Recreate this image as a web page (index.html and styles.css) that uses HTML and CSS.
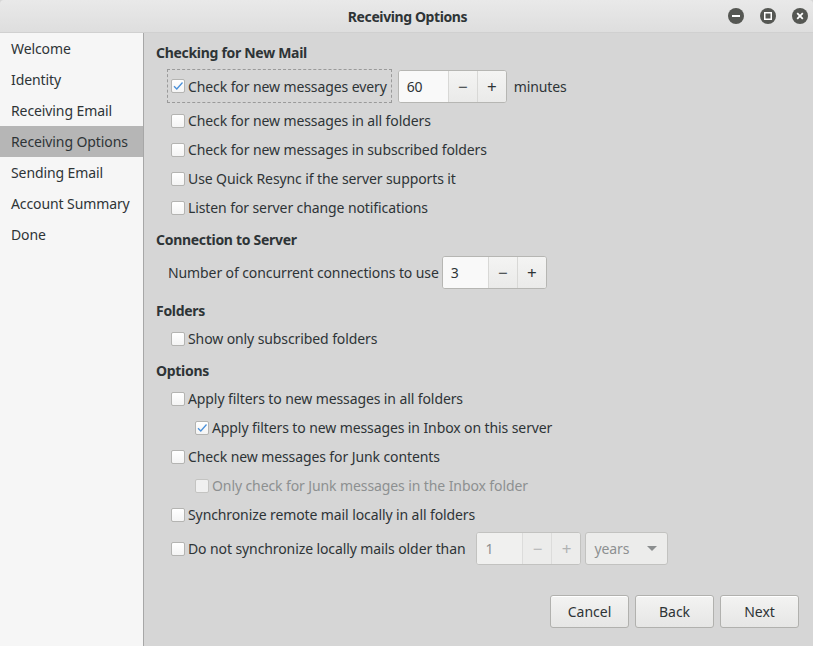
FILE: index.html
```html
<!DOCTYPE html>
<html>
<head>
<meta charset="utf-8">
<link rel="stylesheet" href="styles.css">
</head>
<body>
<div class="window">
  <div class="titlebar">
    <div class="title">Receiving Options</div>
    <div class="wbtns">
      <span class="wbtn"><svg width="16" height="16" viewBox="0 0 16 16"><circle cx="8" cy="8" r="8" fill="#555753"/><rect x="4" y="7" width="8" height="2" fill="#fff"/></svg></span>
      <span class="wbtn"><svg width="16" height="16" viewBox="0 0 16 16"><circle cx="8" cy="8" r="8" fill="#555753"/><rect x="4.75" y="4.75" width="6.5" height="6.5" fill="none" stroke="#fff" stroke-width="1.5"/></svg></span>
      <span class="wbtn"><svg width="16" height="16" viewBox="0 0 16 16"><circle cx="8" cy="8" r="8" fill="#555753"/><path d="M5.2 5.2 L10.8 10.8 M10.8 5.2 L5.2 10.8" stroke="#fff" stroke-width="1.8"/></svg></span>
    </div>
  </div>
  <div class="body">
    <div class="sidebar">
      <div class="sitem">Welcome</div>
      <div class="sitem">Identity</div>
      <div class="sitem">Receiving Email</div>
      <div class="sitem sel">Receiving Options</div>
      <div class="sitem">Sending Email</div>
      <div class="sitem">Account Summary</div>
      <div class="sitem">Done</div>
    </div>
    <div class="main">
      <div class="content">
        <div class="heading">Checking for New Mail</div>
        <div class="row first">
          <label class="check focus"><span class="cb on"><svg width="12" height="12" viewBox="0 0 12 12"><path d="M2 6.2 L4.8 9 L10.5 2.5" fill="none" stroke="#4a90d9" stroke-width="1.3"/></svg></span>Check for new messages every</label>
          <div class="spin w109"><span class="val">60</span><span class="sb">−</span><span class="sb">+</span></div>
          <span class="after">minutes</span>
        </div>
        <div class="row after-first"><label class="check"><span class="cb"></span>Check for new messages in all folders</label></div>
        <div class="row"><label class="check"><span class="cb"></span>Check for new messages in subscribed folders</label></div>
        <div class="row"><label class="check"><span class="cb"></span>Use Quick Resync if the server supports it</label></div>
        <div class="row"><label class="check"><span class="cb"></span>Listen for server change notifications</label></div>

        <div class="heading h-after-row">Connection to Server</div>
        <div class="row conn">
          <span class="plain">Number of concurrent connections to use</span>
          <div class="spin w105"><span class="val">3</span><span class="sb">−</span><span class="sb">+</span></div>
        </div>

        <div class="heading h-after-conn">Folders</div>
        <div class="row top"><label class="check"><span class="cb"></span>Show only subscribed folders</label></div>

        <div class="heading h-after-row">Options</div>
        <div class="row top"><label class="check"><span class="cb"></span>Apply filters to new messages in all folders</label></div>
        <div class="row indent"><label class="check"><span class="cb on"><svg width="12" height="12" viewBox="0 0 12 12"><path d="M2 6.2 L4.8 9 L10.5 2.5" fill="none" stroke="#4a90d9" stroke-width="1.3"/></svg></span>Apply filters to new messages in Inbox on this server</label></div>
        <div class="row"><label class="check"><span class="cb"></span>Check new messages for Junk contents</label></div>
        <div class="row indent disabled"><label class="check"><span class="cb"></span>Only check for Junk messages in the Inbox folder</label></div>
        <div class="row"><label class="check"><span class="cb"></span>Synchronize remote mail locally in all folders</label></div>
        <div class="row last">
          <label class="check"><span class="cb"></span>Do not synchronize locally mails older than</label>
          <div class="spin w105 dis"><span class="val">1</span><span class="sb">−</span><span class="sb">+</span></div>
          <div class="combo dis"><span>years</span><svg width="10" height="6" viewBox="0 0 10 6"><path d="M0 0 L10 0 L5 5 Z" fill="#8b8e8f"/></svg></div>
        </div>
      </div>
      <div class="buttons">
        <button class="btn">Cancel</button>
        <button class="btn">Back</button>
        <button class="btn">Next</button>
      </div>
    </div>
  </div>
</div>
</body>
</html>
```
FILE: styles.css
```css
* { box-sizing: border-box; }
html, body { margin: 0; padding: 0; }
body {
  width: 813px;
  height: 646px;
  overflow: hidden;
  font-family: "Noto Sans", "DejaVu Sans", sans-serif;
  font-size: 14px;
  letter-spacing: -0.1px;
  color: #2e3436;
  background: #d6d6d6;
}
.window { width: 813px; height: 646px; display: flex; flex-direction: column; }
.titlebar {
  height: 33px;
  flex: none;
  background: linear-gradient(#e9e9e9, #dedede);
  border-bottom: 1px solid #d0d0d0;
  border-radius: 4px 4px 0 0;
  position: relative;
  display: flex;
  align-items: center;
  justify-content: center;
}
.title { font-weight: bold; font-size: 14px; color: #2e3436; letter-spacing: -0.4px; padding-left: 2px; }
.wbtns {
  position: absolute;
  right: 5px;
  top: 8px;
  display: flex;
  gap: 16px;
}
.wbtn { width: 16px; height: 16px; display: block; }
.wbtn svg { display: block; }
.body { flex: 1; display: flex; min-height: 0; }
.sidebar {
  width: 144px;
  flex: none;
  background: #f6f6f6;
  border-right: 1px solid #a7a7a7;
}
.sitem {
  height: 31px;
  line-height: 31px;
  padding-left: 11px;
  color: #2e3436;
  white-space: nowrap;
}
.sitem.sel { background: #b6b6b6; }
.main {
  flex: 1;
  display: flex;
  flex-direction: column;
  padding: 10px 14px 18px 12px;
}
.content { flex: 1; }
.heading { font-weight: bold; height: 20px; line-height: 20px; letter-spacing: -0.3px; }
.h-after-row { margin-top: 8px; }
.h-after-conn { margin-top: 12px; }
.row {
  display: flex;
  align-items: center;
  height: 29px;
  padding-left: 12px;
  white-space: nowrap;
}
.row.top { margin-top: 3px; }
.row.first { height: 34px; margin-top: 6px; }
.row.after-first { margin-top: 3px; }
.row.indent { padding-left: 36px; }
.row.conn { height: 33px; margin-top: 6px; }
.row.last { height: 33px; margin-top: 3px; }
.check {
  display: flex;
  align-items: center;
  height: 100%;
  padding-left: 3px;
  padding-right: 4px;
  border: 1px dashed transparent;
  margin-left: -1px;
}
.check.focus { border-color: #9a9a9a; height: 34px; }
.cb {
  width: 14px;
  height: 14px;
  border: 1px solid #b4b4b2;
  border-radius: 2px;
  background: linear-gradient(#ffffff, #f4f4f4);
  margin-right: 3px;
  display: flex;
  align-items: center;
  justify-content: center;
  flex: none;
}
.cb svg { display: block; }
.plain { margin-right: 3px; }
.spin {
  display: flex;
  height: 33px;
  border: 1px solid #b6b6b3;
  border-radius: 3px;
  background: #f6f6f5;
  margin-left: 6px;
  overflow: hidden;
}
.spin .val {
  flex: 1;
  padding-left: 8px;
  display: flex;
  align-items: center;
  background: #f9f9f9;
}
.spin .sb {
  width: 29px;
  display: flex;
  align-items: center;
  justify-content: center;
  border-left: 1px solid #d8d8d6;
  background: linear-gradient(#f4f4f3, #eaeae9);
  font-size: 17px;
}
.w109 { width: 109px; }
.w105 { width: 105px; }
.row.conn .spin { margin-left: 0; }
.after { margin-left: 7px; }
.disabled { color: #8d9091; }
.disabled .cb { background: #f0f0f0; border-color: #c4c4c2; }
.spin.dis { color: #8d9091; border-color: #c2c2c0; background: #f0f0ef; }
.spin.dis .val { background: #f0f0ef; }
.spin.dis .sb { background: #ececeb; color: #b0b2b3; border-left-color: #dcdcdb; }
.row.last .spin { margin-left: 6px; }
.combo {
  width: 83px;
  height: 33px;
  margin-left: 4px;
  border: 1px solid #c2c2c0;
  border-radius: 3px;
  background: #ececeb;
  color: #8d9091;
  display: flex;
  align-items: center;
  justify-content: space-between;
  padding: 0 10px 0 8px;
}
.buttons {
  display: flex;
  justify-content: flex-end;
  gap: 6px;
}
.btn {
  width: 79px;
  height: 33px;
  font-family: inherit;
  font-size: 14px;
  color: #2e3436;
  border: 1px solid #b1b1ae;
  border-radius: 3px;
  background: linear-gradient(#f3f3f2, #e6e6e5);
  box-shadow: inset 0 1px #fff;
  padding: 0;
}
```
